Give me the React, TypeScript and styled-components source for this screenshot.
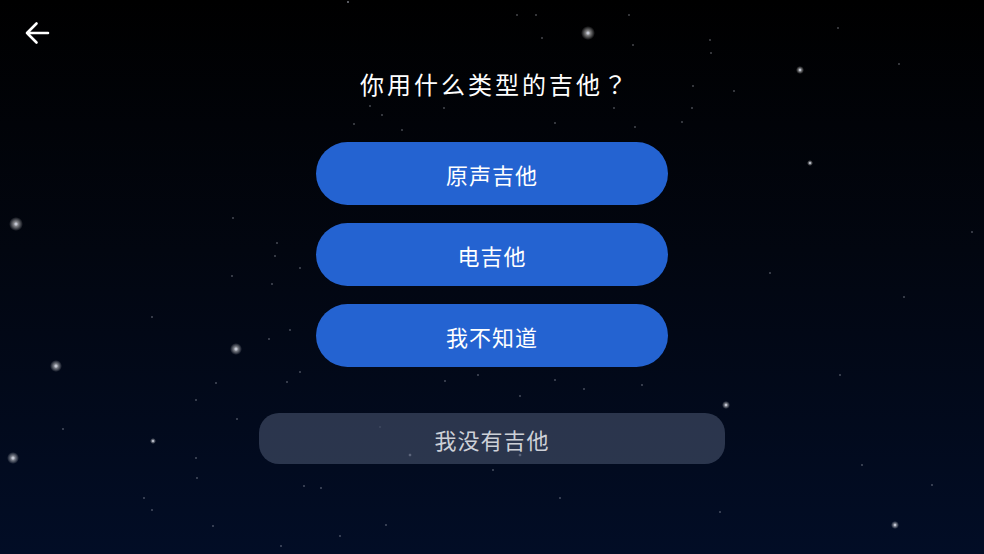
import React from 'react';
import styled, { createGlobalStyle } from 'styled-components';

const GlobalStyle = createGlobalStyle`
  html, body {
    margin: 0;
    padding: 0;
    height: 100%;
    background: #000;
  }
  #root {
    height: 100%;
  }
`;

const Screen = styled.div`
  position: relative;
  width: 984px;
  height: 554px;
  overflow: hidden;
  background: linear-gradient(180deg, #000000 0%, #020610 45%, #020d26 100%);
  font-family: "Noto Sans CJK SC", "Noto Sans", sans-serif;
`;

const Stars = styled.svg`
  position: absolute;
  inset: 0;
  width: 100%;
  height: 100%;
  pointer-events: none;
`;

const Content = styled.div`
  position: relative;
  display: flex;
  flex-direction: column;
  align-items: center;
  padding-top: 64px;
`;

const BackButton = styled.button`
  position: absolute;
  left: 20px;
  top: 16px;
  width: 34px;
  height: 34px;
  padding: 0;
  border: none;
  background: none;
  display: flex;
  align-items: center;
  justify-content: center;
  cursor: pointer;
`;

const Title = styled.h1`
  margin: 0 0 0 6px;
  color: #ffffff;
  font-size: 24px;
  font-weight: 400;
  line-height: 40px;
  letter-spacing: 3px;
`;

const Punct = styled.span`
  font-family: "Noto Sans CJK JP", "Noto Sans CJK SC", sans-serif;
`;

const Options = styled.div`
  display: flex;
  flex-direction: column;
  gap: 18px;
  margin-top: 38px;
`;

const Choice = styled.button<{ $muted?: boolean }>`
  width: ${(p) => (p.$muted ? '466px' : '352px')};
  height: ${(p) => (p.$muted ? '51px' : '63px')};
  border: none;
  border-radius: ${(p) => (p.$muted ? '20px' : '32px')};
  background: ${(p) => (p.$muted ? 'rgba(60, 70, 95, 0.72)' : '#2463d1')};
  color: ${(p) => (p.$muted ? '#cdd0d7' : '#ffffff')};
  font-family: inherit;
  font-size: 22px;
  letter-spacing: 1px;
  cursor: pointer;
`;

const Footer = styled.div`
  margin-top: 46px;
`;

type Star = [number, number, number, number];

// x, y, radius, glow (0 = plain dot)
const stars: Star[] = [
  [588, 33, 1.5, 7], [16, 224, 1.5, 7], [236, 349, 1.5, 6], [56, 366, 1.5, 6],
  [13, 458, 1.5, 6], [726, 405, 1.2, 4], [800, 70, 1.2, 4], [895, 525, 1.2, 4],
  [810, 163, 1, 3], [653, 162, 1, 3], [153, 441, 1, 3], [348, 2, 1, 0],
  [517, 15, 0.8, 0], [536, 15, 0.8, 0], [629, 15, 0.8, 0], [542, 38, 0.8, 0],
  [633, 45, 0.8, 0], [710, 40, 0.8, 0], [838, 28, 0.8, 0], [899, 64, 0.8, 0],
  [711, 53, 0.8, 0], [734, 91, 0.8, 0], [693, 86, 0.8, 0], [692, 108, 0.8, 0],
  [614, 108, 0.8, 0], [555, 123, 0.8, 0], [682, 122, 0.8, 0], [635, 127, 0.8, 0],
  [382, 115, 0.8, 0], [402, 130, 0.8, 0], [354, 124, 0.8, 0], [370, 106, 0.8, 0],
  [444, 108, 0.8, 0], [233, 218, 0.8, 0], [277, 243, 0.8, 0], [300, 268, 0.8, 0],
  [275, 256, 0.8, 0], [272, 284, 0.8, 0], [290, 330, 0.8, 0], [269, 339, 0.8, 0],
  [152, 317, 0.8, 0], [216, 383, 0.8, 0], [196, 400, 0.8, 0], [237, 419, 0.8, 0],
  [63, 429, 0.8, 0], [196, 458, 0.8, 0], [197, 478, 0.8, 0], [144, 498, 0.8, 0],
  [152, 510, 0.8, 0], [213, 526, 0.8, 0], [281, 546, 0.8, 0], [300, 372, 0.8, 0],
  [287, 382, 0.8, 0], [445, 381, 0.8, 0], [478, 375, 0.8, 0], [555, 380, 0.8, 0],
  [520, 396, 0.8, 0], [584, 389, 0.8, 0], [642, 385, 0.8, 0], [380, 427, 0.8, 0],
  [410, 455, 1, 2], [520, 455, 1, 2], [493, 470, 0.8, 0], [560, 498, 0.8, 0],
  [304, 486, 0.8, 0], [321, 488, 0.8, 0], [720, 512, 0.8, 0], [340, 536, 0.8, 0],
  [386, 525, 0.8, 0], [862, 465, 0.8, 0], [932, 485, 0.8, 0], [972, 232, 0.8, 0],
  [904, 297, 0.8, 0], [840, 375, 0.8, 0], [770, 273, 0.8, 0], [232, 276, 0.8, 0],
];

const StarField = () => (
  <Stars viewBox="0 0 984 554" aria-hidden>
    <defs>
      <radialGradient id="glow">
        <stop offset="0%" stopColor="#ffffff" stopOpacity="0.75" />
        <stop offset="100%" stopColor="#ffffff" stopOpacity="0" />
      </radialGradient>
    </defs>
    {stars.map(([x, y, r, g], i) => (
      <g key={i}>
        {g > 0 && <circle cx={x} cy={y} r={g} fill="url(#glow)" />}
        <circle cx={x} cy={y} r={r} fill="#c4c9d6" opacity={g > 0 ? 0.9 : 0.6} />
      </g>
    ))}
  </Stars>
);

const BackArrow = () => (
  <svg width="28" height="28" viewBox="0 0 28 28" fill="none">
    <path
      d="M25 14H4M13.5 4.5L4 14l9.5 9.5"
      stroke="#ffffff"
      strokeWidth="2.6"
      strokeLinecap="round"
      strokeLinejoin="round"
    />
  </svg>
);

export default function App() {
  return (
    <>
      <GlobalStyle />
      <Screen>
        <StarField />
        <BackButton aria-label="返回">
          <BackArrow />
        </BackButton>
        <Content>
          <Title>
            你用什么类型的吉他<Punct>？</Punct>
          </Title>
          <Options>
            <Choice>原声吉他</Choice>
            <Choice>电吉他</Choice>
            <Choice>我不知道</Choice>
          </Options>
          <Footer>
            <Choice $muted>我没有吉他</Choice>
          </Footer>
        </Content>
      </Screen>
    </>
  );
}
